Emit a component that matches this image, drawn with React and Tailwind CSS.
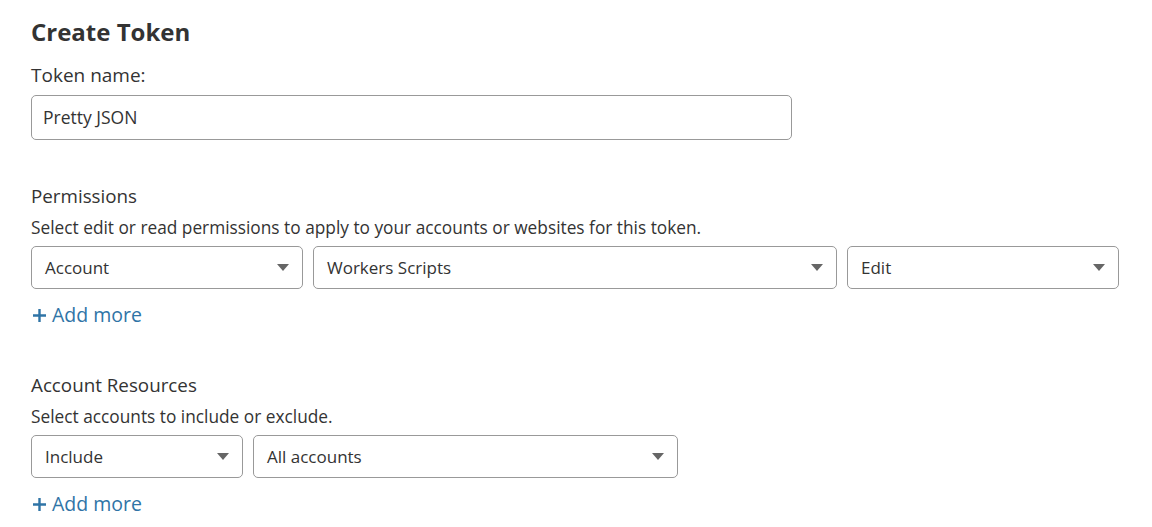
import React from "react";

function Caret() {
  return (
    <svg width="12" height="7" viewBox="0 0 12 7" className="shrink-0">
      <path d="M0 0 L12 0 L6 7 Z" fill="#666666" />
    </svg>
  );
}

function Select({ value, width }) {
  return (
    <div
      className={`flex items-center justify-between h-[43px] border border-[#999999] rounded-[5px] bg-white pl-[13px] pr-[13px] text-[17px] text-[#333333] ${width}`}
    >
      <span>{value}</span>
      <Caret />
    </div>
  );
}

function AddMore() {
  return (
    <div className="flex items-center h-[26px] text-[19.5px] text-[#2f74a6] leading-[26px]">
      <svg width="13" height="13" viewBox="0 0 13 13" className="ml-[2px] mr-[6px] shrink-0">
        <path d="M6.5 0 V13 M0 6.5 H13" stroke="#2f74a6" strokeWidth="2.4" />
      </svg>
      <span>Add more</span>
    </div>
  );
}

export default function App() {
  return (
    <div
      className="w-[1152px] h-[527px] bg-white overflow-hidden pl-[31px] pt-[17px] text-[#333333]"
      style={{ fontFamily: '"Open Sans", "Noto Sans CJK KR", sans-serif' }}
    >
      <h1 className="text-[24px] font-bold leading-[30px] text-[#333333]">Create Token</h1>
      <div className="mt-[16px] text-[19px] leading-[24px]">Token name:</div>
      <div className="mt-[8px] w-[761px] h-[45px] border border-[#999999] rounded-[5px] flex items-center pl-[11px] text-[17.5px]">
        Pretty JSON
      </div>

      <div className="mt-[43px] text-[18.8px] leading-[26px]">Permissions</div>
      <div className="mt-[7px] text-[17.3px] leading-[24px]">
        Select edit or read permissions to apply to your accounts or websites for this token.
      </div>
      <div className="mt-[6px] flex gap-[10px]">
        <Select value="Account" width="w-[272px]" />
        <Select value="Workers Scripts" width="w-[524px]" />
        <Select value="Edit" width="w-[272px]" />
      </div>
      <div className="mt-[13px]">
        <AddMore />
      </div>

      <div className="mt-[44px] text-[18.8px] leading-[26px]">Account Resources</div>
      <div className="mt-[7px] text-[17.3px] leading-[24px]">Select accounts to include or exclude.</div>
      <div className="mt-[6px] flex gap-[10px]">
        <Select value="Include" width="w-[212px]" />
        <Select value="All accounts" width="w-[425px]" />
      </div>
      <div className="mt-[13px]">
        <AddMore />
      </div>
    </div>
  );
}
